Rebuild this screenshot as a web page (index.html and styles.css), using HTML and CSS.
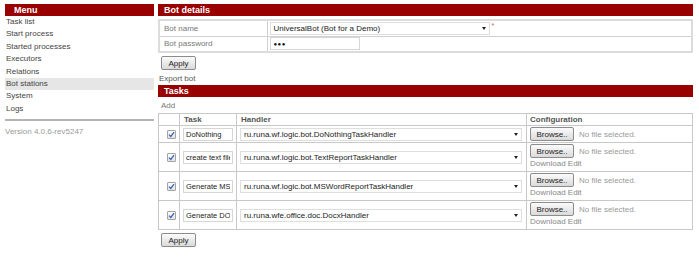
FILE: index.html
```html
<!DOCTYPE html>
<html>
<head>
<meta http-equiv="content-type" content="text/html; charset=UTF-8" />
<title>Bot stations</title>
<link rel="stylesheet" href="styles.css">
</head>
<body>

<div class="page">

  <div class="sidebar">
    <div class="bar bar-menu">Menu</div>
    <ul class="menu">
      <li><a>Task list</a></li>
      <li><a>Start process</a></li>
      <li><a>Started processes</a></li>
      <li><a>Executors</a></li>
      <li><a>Relations</a></li>
      <li class="active"><a>Bot stations</a></li>
      <li><a>System</a></li>
      <li><a>Logs</a></li>
    </ul>
    <div class="version">Version 4.0.6-rev5247</div>
  </div>

  <div class="main">
    <div class="bar">Bot details</div>
    <table class="details">
      <tr>
        <td class="label">Bot name</td>
        <td><span class="select bot-select">UniversalBot (Bot for a Demo)<span class="arrow"></span></span><span class="req">*</span></td>
      </tr>
      <tr>
        <td class="label">Bot password</td>
        <td><input class="field pass" type="text" value="&#9679;&#9679;&#9679;"></td>
      </tr>
    </table>
    <button class="btn apply">Apply</button>
    <div class="link">Export bot</div>

    <div class="bar">Tasks</div>
    <div class="link add">Add</div>
    <table class="tasks">
      <tr>
        <th class="c-check"></th>
        <th class="c-task">Task</th>
        <th class="c-handler">Handler</th>
        <th class="c-config">Configuration</th>
      </tr>
      <tr>
        <td class="c-check"><span class="check"><svg width="7" height="7" viewBox="0 0 7 7"><path d="M1 3.6 L2.8 5.4 L6 1.2" fill="none" stroke="#3a63b5" stroke-width="1.3"/></svg></span></td>
        <td><input class="field task" type="text" value="DoNothing"></td>
        <td><span class="select handler">ru.runa.wf.logic.bot.DoNothingTaskHandler<span class="arrow"></span></span></td>
        <td class="config"><button class="btn browse">Browse..</button><span class="nofile">No file selected.</span></td>
      </tr>
      <tr>
        <td class="c-check"><span class="check"><svg width="7" height="7" viewBox="0 0 7 7"><path d="M1 3.6 L2.8 5.4 L6 1.2" fill="none" stroke="#3a63b5" stroke-width="1.3"/></svg></span></td>
        <td><input class="field task" type="text" value="create text file"></td>
        <td><span class="select handler">ru.runa.wf.logic.bot.TextReportTaskHandler<span class="arrow"></span></span></td>
        <td class="config"><button class="btn browse">Browse..</button><span class="nofile">No file selected.</span>
          <div class="dl">Download Edit</div></td>
      </tr>
      <tr>
        <td class="c-check"><span class="check"><svg width="7" height="7" viewBox="0 0 7 7"><path d="M1 3.6 L2.8 5.4 L6 1.2" fill="none" stroke="#3a63b5" stroke-width="1.3"/></svg></span></td>
        <td><input class="field task" type="text" value="Generate MS Word report"></td>
        <td><span class="select handler">ru.runa.wf.logic.bot.MSWordReportTaskHandler<span class="arrow"></span></span></td>
        <td class="config"><button class="btn browse">Browse..</button><span class="nofile">No file selected.</span>
          <div class="dl">Download Edit</div></td>
      </tr>
      <tr>
        <td class="c-check"><span class="check"><svg width="7" height="7" viewBox="0 0 7 7"><path d="M1 3.6 L2.8 5.4 L6 1.2" fill="none" stroke="#3a63b5" stroke-width="1.3"/></svg></span></td>
        <td><input class="field task" type="text" value="Generate DOCX"></td>
        <td><span class="select handler">ru.runa.wfe.office.doc.DocxHandler<span class="arrow"></span></span></td>
        <td class="config"><button class="btn browse">Browse..</button><span class="nofile">No file selected.</span>
          <div class="dl">Download Edit</div></td>
      </tr>
    </table>
    <button class="btn apply">Apply</button>
  </div>

</div>

</body>
</html>
```

FILE: styles.css
```css
* {
margin: 0;
padding: 0;
box-sizing: border-box;
}

html,body{
background-color: #fff;
font-family: "Liberation Sans", Arial, sans-serif;
font-size: 8px;
color: #444;
}

.page{
display: flex;
gap: 4px;
padding: 4px 0 0 5px;
}

.sidebar{
width: 149px;
}

.main{
width: 535px;
}

.bar{
height: 12px;
line-height: 12px;
background-color: #990000;
color: #fff;
font-weight: bold;
font-size: 9px;
padding-left: 6px;
}

.bar-menu{
padding-left: 9px;
}

.menu{
list-style: none;
}

.menu li{
height: 12.4px;
line-height: 12.4px;
padding-left: 1px;
}

.menu li.active{
background-color: #e6e6e6;
}

.version{
margin-top: 4px;
border-top: 2px solid #b4b4b4;
padding-top: 5px;
line-height: 12px;
color: #9a9a9a;
}

/* bot details */
.details{
width: 100%;
margin-top: 3px;
border-collapse: collapse;
border: 2px solid #dcdcdc;
}

.details td{
height: 16px;
border: 1px solid #d0d0d0;
padding: 0 2px;
vertical-align: middle;
}

.details td.label{
width: 108px;
padding-left: 4px;
color: #777;
}

.select{
display: inline-flex;
align-items: center;
height: 13px;
border: 1px solid #dedede;
padding: 0 3px;
color: #222;
background-color: #fff;
white-space: nowrap;
vertical-align: middle;
}

.bot-select{
width: 220px;
}

.arrow{
margin-left: auto;
border-left: 2.5px solid transparent;
border-right: 2.5px solid transparent;
border-top: 3px solid #222;
}

.req{
color: #e05050;
font-size: 7px;
vertical-align: top;
margin-left: 2px;
}

.field{
height: 13px;
border: 1px solid #d6d6d6;
padding: 0 3px;
font-family: inherit;
font-size: 8px;
color: #222;
vertical-align: middle;
outline: 0;
}

.pass{
width: 90px;
font-size: 6px;
letter-spacing: 0.5px;
color: #111;
}

.btn{
display: inline-block;
height: 14px;
border: 1px solid #8c8c8c;
border-radius: 2px;
background: linear-gradient(#fbfbfb, #dadada);
font-family: inherit;
font-size: 8px;
color: #222;
vertical-align: middle;
}

.apply{
display: block;
width: 35px;
margin: 3px 0 0 3px;
}

.link{
margin-top: 3px;
line-height: 12px;
padding-left: 1px;
color: #555;
}

.add{
padding-left: 3px;
color: #777;
}

/* tasks */
.tasks{
width: 100%;
margin-top: 1px;
border-collapse: collapse;
border: 1px solid #c8c8c8;
}

.tasks th{
height: 12px;
border: 1px solid #c8c8c8;
text-align: left;
padding-left: 4px;
font-weight: bold;
color: #555;
}

.tasks td{
border: 1px solid #c8c8c8;
padding: 1px 3px;
vertical-align: middle;
}

.tasks th.c-check{
width: 21px;
}

.tasks th.c-task{
width: 57px;
}

.tasks th.c-handler{
width: 290px;
}

.tasks th.c-config{
padding-left: 3px;
}

.tasks td.c-check{
padding: 1px 0 0 8px;
}

.check{
display: flex;
align-items: center;
justify-content: center;
width: 9px;
height: 9px;
border: 1px solid #a4a4a4;
border-radius: 1px;
background: linear-gradient(#fdfdfd, #e2e2e2);
}

.task{
width: 50px;
padding: 0 2px;
font-size: 7.5px;
}

.handler{
width: 282px;
}

.tasks td.config{
vertical-align: top;
padding-left: 3px;
}

.browse{
width: 44px;
}

.nofile{
margin-left: 5px;
color: #999;
vertical-align: middle;
}

.dl{
line-height: 12px;
color: #888;
}
```
